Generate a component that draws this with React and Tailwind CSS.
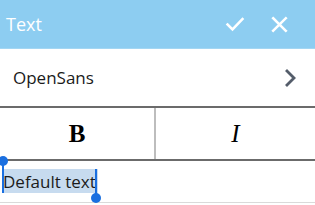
import React from 'react';

function CheckIcon() {
  return (
    <svg width="20" height="20" viewBox="0 0 24 24" fill="none" stroke="white" strokeWidth="3" strokeLinecap="square">
      <path d="M3 12.5l6 6L21 6" />
    </svg>
  );
}

function CloseIcon() {
  return (
    <svg width="19" height="19" viewBox="0 0 24 24" fill="none" stroke="white" strokeWidth="3.2" strokeLinecap="square">
      <path d="M4 4l16 16M20 4L4 20" />
    </svg>
  );
}

function ChevronIcon() {
  return (
    <svg width="14" height="18" viewBox="0 0 14 18" fill="none" stroke="#545d6a" strokeWidth="2.8" strokeLinecap="square">
      <path d="M3 2l7 7-7 7" />
    </svg>
  );
}

export default function App() {
  return (
    <div className="w-[315px] h-[205px] bg-white overflow-hidden" style={{ fontFamily: '"Open Sans", sans-serif' }}>
      <div className="h-[49px] bg-[#8dcdf1] border-b border-[#a3d6f3] flex items-center pl-[6px] pr-[26px]">
        <span className="text-white text-[18px] flex-1">Text</span>
        <div className="flex items-center gap-[25px]">
          <CheckIcon />
          <CloseIcon />
        </div>
      </div>
      <div className="h-[59px] flex items-center pl-[13px] pr-[17px] border-b-2 border-[#6b6b6b]">
        <span className="text-[17px] text-[#1b1b1b] flex-1">OpenSans</span>
        <ChevronIcon />
      </div>
      <div className="h-[53px] grid grid-cols-[156px_1fr] border-b-2 border-[#6b6b6b]">
        <div className="flex items-center justify-center border-r-2 border-[#bdbdbd]" style={{ fontFamily: '"Liberation Serif", serif' }}>
          <span className="font-bold text-[25px] text-black">B</span>
        </div>
        <div className="flex items-center justify-center" style={{ fontFamily: '"Liberation Serif", serif' }}>
          <span className="italic text-[25px] text-black">I</span>
        </div>
      </div>
      <div className="h-[42px] border-b border-[#dadada] relative">
        <div className="absolute left-[3px] top-[8px] h-[24px] flex items-center bg-[#c7dbef]">
          <span className="text-[17px] text-[#1b1b1b] leading-none pr-[2px]">Default text</span>
        </div>
        <div className="absolute left-[2px] top-0 w-[2px] h-[32px] bg-[#1a6fe0]" />
        <div className="absolute left-[-2px] top-[-5px] w-[10px] h-[10px] rounded-full bg-[#1a6fe0]" />
        <div className="absolute left-[95px] top-[8px] w-[2px] h-[26px] bg-[#1a6fe0]" />
        <div className="absolute left-[91px] top-[32px] w-[10px] h-[10px] rounded-full bg-[#1a6fe0]" />
      </div>
    </div>
  );
}
